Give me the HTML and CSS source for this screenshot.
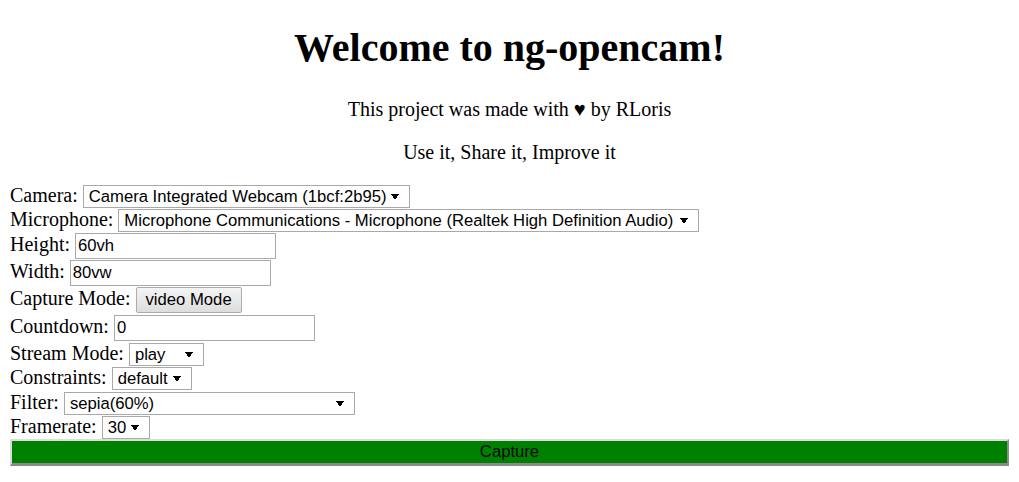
FILE: index.html
```html
<!DOCTYPE html>
<html>
<head>
<meta charset="utf-8">
<title>ng-opencam</title>
<link rel="stylesheet" href="styles.css">
</head>
<body>
<h1 class="title">Welcome to ng-opencam!</h1>
<p class="lead">This project was made with ♥ by RLoris</p>
<p class="lead">Use it, Share it, Improve it</p>
<div class="form">
  <div class="row">Camera: <select class="sel sel-camera"><option>Camera Integrated Webcam (1bcf:2b95)</option></select></div>
  <div class="row row-25">Microphone: <select class="sel sel-mic"><option>Microphone Communications - Microphone (Realtek High Definition Audio)</option></select></div>
  <div class="row row-27">Height: <input class="txt" type="text" value="60vh"></div>
  <div class="row row-27">Width: <input class="txt" type="text" value="80vw"></div>
  <div class="row row-28">Capture Mode: <button class="btn">video Mode</button></div>
  <div class="row row-27">Countdown: <input class="txt" type="text" value="0"></div>
  <div class="row">Stream Mode: <select class="sel sel-stream"><option>play</option></select></div>
  <div class="row row-25">Constraints: <select class="sel sel-constraints"><option>default</option></select></div>
  <div class="row">Filter: <select class="sel sel-filter"><option>sepia(60%)</option></select></div>
  <div class="row">Framerate: <select class="sel sel-rate"><option>30</option></select></div>
  <button class="capture">Capture</button>
</div>
</body>
</html>
```
FILE: styles.css
```css
body {
  margin: 10px;
  font-family: "Liberation Serif", "Times New Roman", serif;
  font-size: 20px;
  color: #000;
  background: #fff;
}
.title {
  font-size: 40px;
  font-weight: bold;
  text-align: center;
  margin: 15px 0 27px;
  line-height: 46px;
}
.lead {
  text-align: center;
  margin: 20px 0;
  line-height: 23px;
}
.row {
  line-height: 23px;
  height: 24px;
  white-space: nowrap;
}
.row-25 { height: 25px; }
.row-27 { height: 27px; }
.row-28 { height: 28px; }
.sel, .txt, .btn, .capture {
  font-family: "Liberation Sans", Arial, sans-serif;
  font-size: 16.67px;
  color: #000;
  vertical-align: baseline;
  box-sizing: border-box;
  margin: 0;
}
.sel {
  -webkit-appearance: none;
  appearance: none;
  height: 23px;
  border: 1px solid #a9a9a9;
  border-radius: 0;
  padding: 0 20px 0 5px;
  background-color: #fff;
  background-image:
    linear-gradient(to bottom left, #000 50%, transparent 50%),
    linear-gradient(to bottom right, #000 50%, transparent 50%);
  background-size: 4px 6px, 4px 6px;
  background-repeat: no-repeat;
  background-position: right 14px center, right 10px center;
}
.sel-camera { width: 327px; }
.sel-mic { width: 581px; }
.sel-stream { width: 75px; }
.sel-constraints { width: 80px; }
.sel-filter { width: 291px; }
.sel-rate { width: 48px; }
.txt {
  width: 201px;
  height: 26px;
  border: 1px solid #a9a9a9;
  padding: 1px 2px;
  background: #fff;
}
.btn {
  height: 26px;
  padding: 0 9px;
  border: 1px solid #adadad;
  border-radius: 2px;
  background: linear-gradient(#f4f4f4, #dddddd);
}
.capture {
  display: block;
  width: 100%;
  height: 27px;
  padding: 0;
  background: #008000;
  border-width: 2px 2px 3px 2px;
  border-style: solid;
  border-color: #dcdcdc #8a8a8a #8a8a8a #dcdcdc;
  color: #0a0a0a;
}
```
